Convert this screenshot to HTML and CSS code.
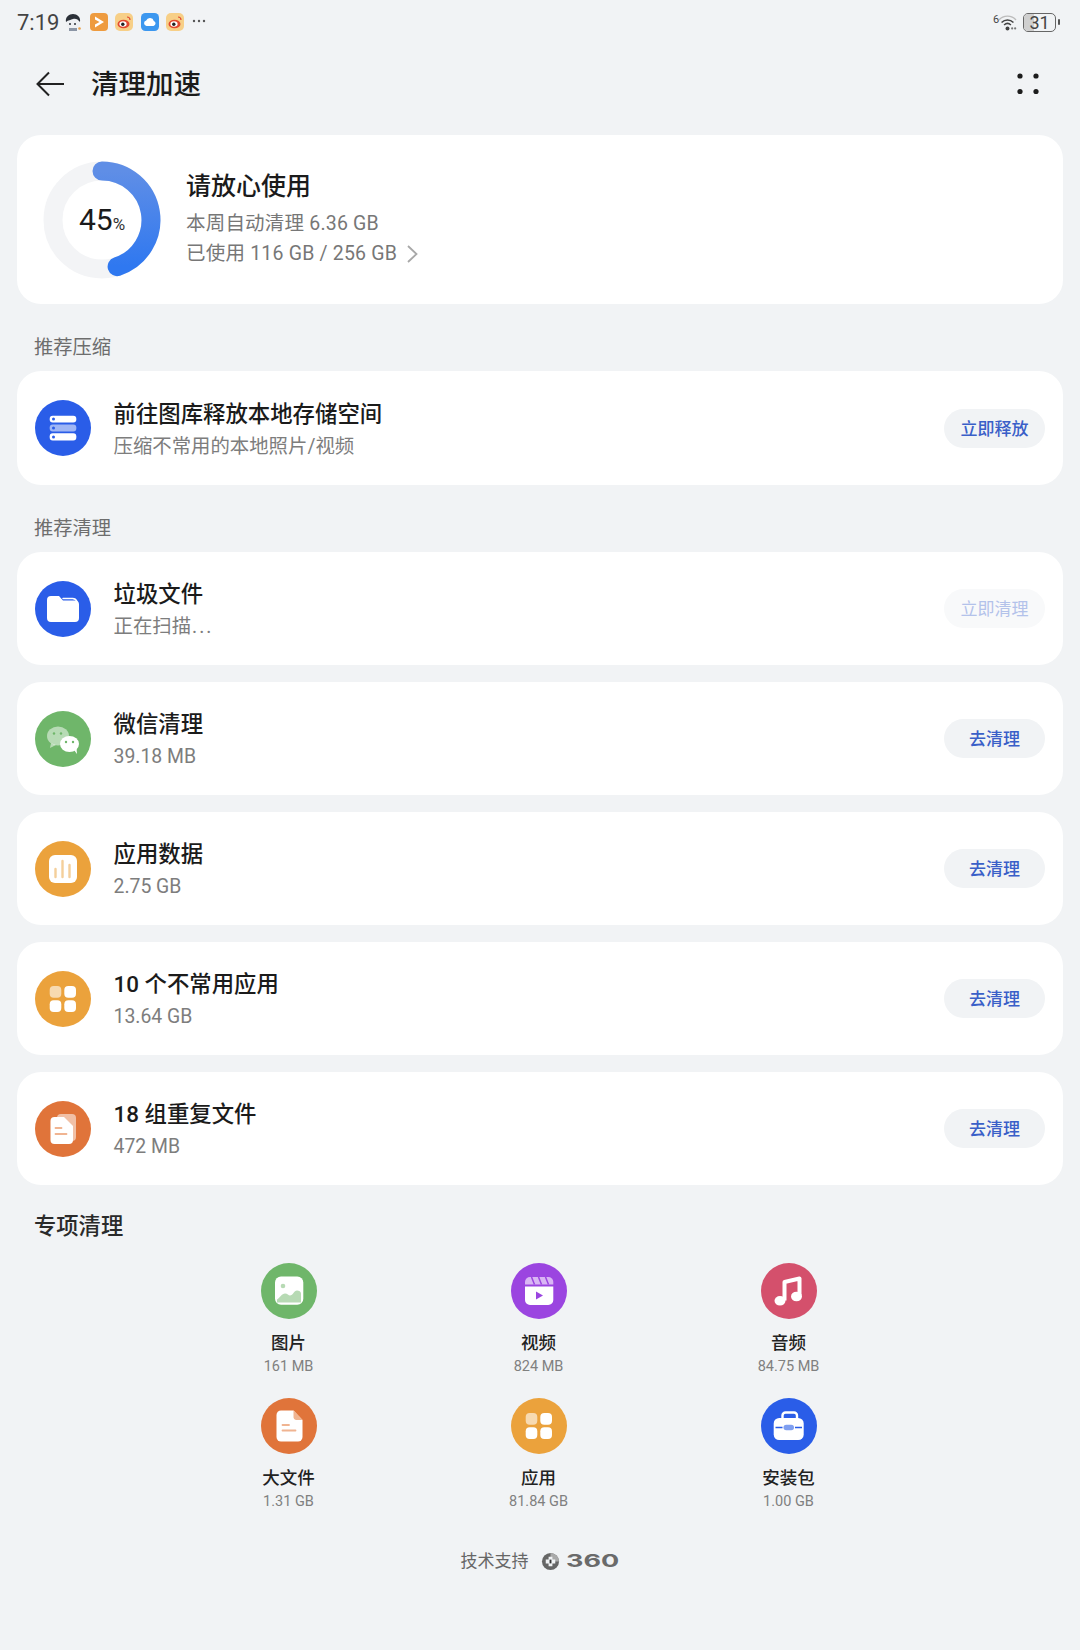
FILE: index.html
```html
<!DOCTYPE html>
<html lang="zh-CN">
<head>
<meta charset="utf-8">
<title>清理加速</title>
<link rel="stylesheet" href="styles.css">
</head>
<body>
<div class="status">
  <div class="status-left">
    <span class="time">7:19</span>
    <svg class="ni" viewBox="0 0 18 18"><circle cx="9" cy="10" r="7" fill="#eef0f3"/><path d="M2 9C1 4 5 1 9 1s8 3 7 8c-2-3-5-4-7-3-2 1-5 1-7 3z" fill="#2b3038"/><circle cx="6" cy="11" r="1" fill="#2b3038"/><circle cx="11" cy="11" r="1" fill="#2b3038"/><path d="M5 15h8v3H5z" fill="#8b95a5"/><circle cx="15.500" cy="15.500" r="1.300" fill="#e8a04a"/></svg>
    <svg class="ni" viewBox="0 0 18 18"><rect width="18" height="18" rx="4" fill="#ee9b3f"/><path d="M5 3.500l9 5.500-9 5.500v-3l4.500-2.500L5 6.500z" fill="#fff"/></svg>
    <svg class="ni" viewBox="0 0 18 18"><rect width="18" height="18" rx="5" fill="#f7cf87"/><ellipse cx="8.500" cy="11" rx="6" ry="4.300" fill="#e2492f"/><ellipse cx="8" cy="11" rx="3.600" ry="2.800" fill="#fff"/><circle cx="7.800" cy="11.200" r="1.700" fill="#222"/><path d="M12 4c2 0 3 1.500 3 3" stroke="#e2492f" stroke-width="1.200" fill="none"/></svg>
    <svg class="ni" viewBox="0 0 18 18"><rect width="18" height="18" rx="4.500" fill="#3c97ef"/><path d="M5.500 13a2.800 2.800 0 0 1-.3-5.500A4 4 0 0 1 12.800 8 2.600 2.600 0 0 1 12.500 13z" fill="#fff"/></svg>
    <svg class="ni" viewBox="0 0 18 18"><rect width="18" height="18" rx="5" fill="#f7cf87"/><ellipse cx="8.500" cy="11" rx="6" ry="4.300" fill="#e2492f"/><ellipse cx="8" cy="11" rx="3.600" ry="2.800" fill="#fff"/><circle cx="7.800" cy="11.200" r="1.700" fill="#222"/><path d="M12 4c2 0 3 1.500 3 3" stroke="#e2492f" stroke-width="1.200" fill="none"/></svg>
    <svg class="more" viewBox="0 0 14 4"><circle cx="2" cy="2" r="1.200" fill="#555"/><circle cx="7" cy="2" r="1.200" fill="#555"/><circle cx="12" cy="2" r="1.200" fill="#555"/></svg>
  </div>
  <div class="status-right">
    <span class="wifi-wrap">
      <span class="wifi-six">6</span>
      <svg class="wifi" viewBox="0 0 22 20"><path d="M1 7C6 1 16 1 21 7" fill="none" stroke="#bcbcbc" stroke-width="1.600"/><path d="M4 10c4-4 10-4 14 0" fill="none" stroke="#444" stroke-width="1.800"/><path d="M7 13c2.500-2.400 5.500-2.400 8 0" fill="none" stroke="#444" stroke-width="1.800"/><circle cx="11" cy="17" r="2.300" fill="#444"/><circle cx="16.500" cy="17" r="1.300" fill="#777"/><circle cx="20" cy="17" r="1.300" fill="#777"/></svg>
    </span>
    <span class="battery"><span class="battery-fill"></span><span class="battery-num">31</span></span>
    <span class="battery-tip"></span>
  </div>
</div>

<header class="topbar">
  <svg class="back" viewBox="0 0 28 26"><path d="M13 1.500 1.500 13 13 24.500M1.500 13H28" fill="none" stroke="#222" stroke-width="2"/></svg>
  <h1 class="page-title">清理加速</h1>
  <svg class="menu" viewBox="0 0 22 22"><circle cx="3" cy="3" r="2.600" fill="#1c1c1c"/><circle cx="19" cy="3" r="2.600" fill="#1c1c1c"/><circle cx="3" cy="18.500" r="2.600" fill="#1c1c1c"/><circle cx="19" cy="18.500" r="2.600" fill="#1c1c1c"/></svg>
</header>

<main class="content">
  <section class="card summary">
    <div class="ring">
      <svg class="ring-svg" viewBox="0 0 118 118">
        <defs><linearGradient id="ringg" x1="0" y1="0" x2="0" y2="1"><stop offset="0" stop-color="#5f8ee6"/><stop offset="1" stop-color="#2f78f0"/></linearGradient></defs>
        <circle cx="59" cy="59" r="49" fill="none" stroke="#f3f4f6" stroke-width="19"/>
        <path d="M59 10A49 49 0 0 1 74.100 105.600" fill="none" stroke="url(#ringg)" stroke-width="19" stroke-linecap="round"/>
      </svg>
      <div class="ring-label"><span class="ring-num">45</span><span class="ring-pct">%</span></div>
    </div>
    <div class="summary-text">
      <div class="summary-title">请放心使用</div>
      <div class="summary-sub">本周自动清理 6.36 GB</div>
      <div class="summary-sub">已使用 116 GB / 256 GB
        <svg class="chev" viewBox="0 0 11 18"><path d="M1 1l8.500 8L1 17" fill="none" stroke="#a8a8a8" stroke-width="1.800"/></svg>
      </div>
    </div>
  </section>

  <h2 class="label">推荐压缩</h2>
  <section class="card row">
    <svg class="icon" viewBox="0 0 56 56"><circle cx="28" cy="28" r="28" fill="#2a5de8"/><rect x="14.700" y="15.700" width="26.600" height="6.800" rx="3" fill="#fff"/><rect x="14.700" y="24.400" width="26.600" height="7" rx="3" fill="#fff" fill-opacity=".55"/><rect x="14.700" y="33.300" width="26.600" height="7.200" rx="3" fill="#fff"/><circle cx="18.500" cy="19" r="1.500" fill="#2a5de8"/><circle cx="18.500" cy="28" r="1.500" fill="#2a5de8"/><circle cx="18.500" cy="37" r="1.500" fill="#2a5de8"/></svg>
    <div class="row-text"><div class="row-title">前往图库释放本地存储空间</div><div class="row-sub">压缩不常用的本地照片/视频</div></div>
    <span class="btn">立即释放</span>
  </section>

  <h2 class="label">推荐清理</h2>
  <div class="stack">
    <section class="card row">
      <svg class="icon" viewBox="0 0 56 56"><circle cx="28" cy="28" r="28" fill="#2a5de8"/><path d="M12 19a4 4 0 0 1 4-4h8l4 4.500h12a4 4 0 0 1 4 4V37a4 4 0 0 1-4 4H16a4 4 0 0 1-4-4z" fill="#fff"/><path d="M28 17.500h9a5 5 0 0 1 5 3" fill="none" stroke="#fff" stroke-width="1.500" stroke-linecap="round"/></svg>
      <div class="row-text"><div class="row-title">垃圾文件</div><div class="row-sub">正在扫描<span class="dots">...</span></div></div>
      <span class="btn btn-off">立即清理</span>
    </section>
    <section class="card row">
      <svg class="icon" viewBox="0 0 56 56"><circle cx="28" cy="28" r="28" fill="#6fb66a"/><ellipse cx="23" cy="25" rx="11" ry="9.500" fill="#fff" fill-opacity=".5"/><path d="M16 32l-1 5 6-3z" fill="#fff" fill-opacity=".5"/><ellipse cx="34.500" cy="33" rx="9.500" ry="8" fill="#fff"/><path d="M39 39l3 4-.5-6z" fill="#fff"/><circle cx="19" cy="22.500" r="1.200" fill="#6fb66a"/><circle cx="26" cy="22.500" r="1.200" fill="#6fb66a"/><circle cx="31" cy="31" r="1.200" fill="#6fb66a"/><circle cx="38" cy="31" r="1.200" fill="#6fb66a"/></svg>
      <div class="row-text"><div class="row-title">微信清理</div><div class="row-sub">39.18 MB</div></div>
      <span class="btn">去清理</span>
    </section>
    <section class="card row">
      <svg class="icon" viewBox="0 0 56 56"><circle cx="28" cy="28" r="28" fill="#eba23c"/><rect x="14" y="14" width="28" height="28" rx="6" fill="#fff"/><path d="M20.500 28v8M27.500 20v16M34.500 24v12" stroke="#f4cf9b" stroke-width="2.400" stroke-linecap="round"/></svg>
      <div class="row-text"><div class="row-title">应用数据</div><div class="row-sub">2.75 GB</div></div>
      <span class="btn">去清理</span>
    </section>
    <section class="card row">
      <svg class="icon" viewBox="0 0 56 56"><circle cx="28" cy="28" r="28" fill="#eba23c"/><rect x="14.700" y="15" width="11.600" height="11.700" rx="4" fill="#fff" fill-opacity=".6"/><rect x="29.300" y="15" width="11.700" height="11.700" rx="4" fill="#fff"/><rect x="14.700" y="29.300" width="11.600" height="11.700" rx="4" fill="#fff"/><rect x="29.300" y="29.300" width="11.700" height="11.700" rx="4" fill="#fff"/></svg>
      <div class="row-text"><div class="row-title">10 个不常用应用</div><div class="row-sub">13.64 GB</div></div>
      <span class="btn">去清理</span>
    </section>
    <section class="card row">
      <svg class="icon" viewBox="0 0 56 56"><circle cx="28" cy="28" r="28" fill="#e0743a"/><rect x="22" y="13" width="19" height="27" rx="4" fill="#fff" fill-opacity=".55"/><path d="M15.500 20a4 4 0 0 1 4-4H29l9 9v14a4 4 0 0 1-4 4H19.500a4 4 0 0 1-4-4z" fill="#fff"/><path d="M20.500 27h6M20.500 33h11" stroke="#f0b491" stroke-width="1.800" stroke-linecap="round"/></svg>
      <div class="row-text"><div class="row-title">18 组重复文件</div><div class="row-sub">472 MB</div></div>
      <span class="btn">去清理</span>
    </section>
  </div>

  <h2 class="label-strong">专项清理</h2>
  <div class="grid">
    <div class="tile">
      <svg class="icon" viewBox="0 0 56 56"><circle cx="28" cy="28" r="28" fill="#6fb66a"/><rect x="14" y="13.500" width="28.300" height="28.300" rx="6" fill="#fff"/><circle cx="22" cy="23" r="2.300" fill="#b7dab4"/><path d="M16 39.500v-3c3-2 5-6 8-6 2.500 0 3.500 2 5 2 3 0 4-5 7-5 2 0 4 1 4 3v9z" fill="#b7dab4"/></svg>
      <div class="tile-name">图片</div><div class="tile-size">161 MB</div>
    </div>
    <div class="tile">
      <svg class="icon" viewBox="0 0 56 56"><circle cx="28" cy="28" r="28" fill="#9b45e0"/><path d="M14 21.500V19a5 5 0 0 1 5-5h18.300a5 5 0 0 1 5 5v2.500z" fill="#d9b6f4"/><path d="M20.500 14l3 7.500M27.500 14l3 7.500M34.500 14l3 7.500" stroke="#9b45e0" stroke-width="1.500"/><path d="M14 23.500h28.300V37a5 5 0 0 1-5 5H19a5 5 0 0 1-5-5z" fill="#fff"/><path d="M25 28.500l7 4-7 4z" fill="#9b45e0"/></svg>
      <div class="tile-name">视频</div><div class="tile-size">824 MB</div>
    </div>
    <div class="tile">
      <svg class="icon" viewBox="0 0 56 56"><circle cx="28" cy="28" r="28" fill="#d4506c"/><path d="M23.500 37.500V19l15-3.500v17" fill="none" stroke="#fff" stroke-width="4" stroke-linejoin="round"/><ellipse cx="19" cy="37.800" rx="5.500" ry="4.800" fill="#fff"/><ellipse cx="35.500" cy="33.500" rx="5.500" ry="4.800" fill="#fff"/></svg>
      <div class="tile-name">音频</div><div class="tile-size">84.75 MB</div>
    </div>
    <div class="tile">
      <svg class="icon" viewBox="0 0 56 56"><circle cx="28" cy="28" r="28" fill="#e0743a"/><path d="M15.500 17a4.500 4.500 0 0 1 4.500-4.500h12.500L41.500 22v17a4.500 4.500 0 0 1-4.500 4.500H20a4.500 4.500 0 0 1-4.500-4.500z" fill="#fff"/><path d="M32.500 12.500v6a3 3 0 0 0 3 3.500h6z" fill="#f0b491"/><path d="M21.500 27h6.500M21.500 32.500h13" stroke="#f0b491" stroke-width="1.800" stroke-linecap="round"/></svg>
      <div class="tile-name">大文件</div><div class="tile-size">1.31 GB</div>
    </div>
    <div class="tile">
      <svg class="icon" viewBox="0 0 56 56"><circle cx="28" cy="28" r="28" fill="#eba23c"/><rect x="14.700" y="15" width="11.600" height="11.700" rx="4" fill="#fff" fill-opacity=".6"/><rect x="29.300" y="15" width="11.700" height="11.700" rx="4" fill="#fff"/><rect x="14.700" y="29.300" width="11.600" height="11.700" rx="4" fill="#fff"/><rect x="29.300" y="29.300" width="11.700" height="11.700" rx="4" fill="#fff"/></svg>
      <div class="tile-name">应用</div><div class="tile-size">81.84 GB</div>
    </div>
    <div class="tile">
      <svg class="icon" viewBox="0 0 56 56"><circle cx="28" cy="28" r="28" fill="#2a5de8"/><path d="M21.500 20v-2.500a3 3 0 0 1 3-3h8.500a3 3 0 0 1 3 3V20" fill="none" stroke="#fff" stroke-width="2.400"/><rect x="12.700" y="20" width="30" height="22" rx="5.500" fill="#fff"/><path d="M14.500 29.500h7M34 29.500h7" stroke="#2a5de8" stroke-width="1.300"/><rect x="22.500" y="26.700" width="10.500" height="5.600" rx="2.800" fill="#7f9ff0"/></svg>
      <div class="tile-name">安装包</div><div class="tile-size">1.00 GB</div>
    </div>
  </div>

  <footer class="foot">
    <span class="foot-text">技术支持</span>
    <svg class="foot-logo" viewBox="0 0 20 20"><circle cx="10" cy="10" r="9" fill="#666"/><path d="M10 1a9 9 0 0 1 9 9h-9z" fill="#aaa"/><path d="M8 5h4v3h3v4h-3v3H8v-3H5V8h3z" fill="#f1f3f5"/><path d="M9 8h2v4H9z" fill="#333"/></svg>
    <span class="foot-brand">360</span>
  </footer>
</main>
</body>
</html>
```

FILE: styles.css
```css
* { box-sizing: border-box; }
html, body { margin: 0; padding: 0; }
body {
  width: 1080px;
  height: 1650px;
  overflow: hidden;
  background: #f1f3f5;
  color: #1b1b1b;
  font-family: Roboto, "Noto Sans CJK SC", sans-serif;
}

.status {
  height: 44px;
  display: flex;
  align-items: center;
  justify-content: space-between;
  padding: 0 20px 0 17px;
}
.status-left { display: flex; align-items: center; gap: 7.5px; }
.time { font-size: 22px; color: #444; width: 39px; margin-right: .5px; }
.ni { width: 18px; height: 18px; display: block; }
.more { width: 14px; height: 4px; margin-bottom: 2px; display: block; }
.status-right { display: flex; align-items: center; }
.wifi-wrap { display: flex; align-items: flex-start; margin-right: 6px; }
.wifi-six { font-size: 11px; line-height: 12px; color: #444; width: 5px; }
.wifi { width: 19px; height: 17px; display: block; }
.battery {
  position: relative;
  width: 33px;
  height: 19px;
  border: 1.5px solid #666;
  border-radius: 5px;
  display: flex;
  align-items: center;
  justify-content: center;
  overflow: hidden;
}
.battery-fill { position: absolute; left: 0; top: 0; bottom: 0; width: 31%; background: #cfcfcf; }
.battery-num { position: relative; font-size: 18px; line-height: 17px; color: #444; }
.battery-tip { width: 2px; height: 6px; background: #555; margin-left: 2px; border-radius: 1px; }

.topbar {
  height: 80px;
  display: flex;
  align-items: center;
  padding: 0 41px 0 36px;
}
.back { width: 28px; height: 26px; display: block; }
.page-title { flex: 1; margin: 2px 0 0 27px; font-size: 27.5px; line-height: 36px; font-weight: 500; color: #1b1b1b; }
.menu { width: 22px; height: 22px; display: block; }

.content { padding: 11px 17px 0; }
.card { background: #fff; border-radius: 24px; }

.summary { height: 169px; display: flex; align-items: center; padding-left: 26px; }
.ring { position: relative; width: 118px; height: 118px; flex: none; }
.ring-svg { width: 118px; height: 118px; display: block; }
.ring-label {
  position: absolute;
  inset: 0;
  display: flex;
  align-items: baseline;
  justify-content: center;
  padding-top: 41px;
  line-height: 36px;
}
.ring-num { font-size: 30px; color: #1b1b1b; }
.ring-pct { font-size: 17px; color: #333; }
.summary-text { margin-left: 25px; padding-top: 3px; }
.summary-title { font-size: 25px; line-height: 34px; font-weight: 500; margin-bottom: 3px; margin-top: -5px; }
.summary-sub { font-size: 19.5px; line-height: 30px; color: #777; letter-spacing: .2px; display: flex; align-items: center; gap: 10px; position: relative; top: 2px; }
.chev { width: 11px; height: 18px; display: block; }

.label { margin: 0; font-size: 19.3px; line-height: 26px; font-weight: 400; color: #6d6d6d; padding: 31px 0 10px 17px; }
.stack { display: grid; gap: 17px; }
.row { height: 113px; display: flex; align-items: center; padding: 0 18px 0 17.5px; }
.row:not(.stack .row) { height: 114px; }
.icon { width: 56px; height: 56px; display: block; flex: none; }
.row-text { flex: 1; margin-left: 23px; padding-top: 5px; }
.row-title { font-size: 22.4px; line-height: 31px; font-weight: 500; color: #1b1b1b; }
.row-sub { font-size: 19.4px; line-height: 33px; color: #7d7d7d; }
.dots { letter-spacing: 2px; margin-left: 1px; }
.btn {
  width: 101px;
  height: 39px;
  border-radius: 20px;
  background: #f1f3f5;
  color: #3a5fc8;
  font-size: 17px;
  font-weight: 500;
  line-height: 41px;
  text-align: center;
}
.btn-off { background: #f8f9fa; color: #b3c2ea; font-weight: 400; }

.label-strong { margin: 0; font-size: 22.3px; line-height: 30px; font-weight: 500; color: #2a2a2a; padding: 26px 0 22px 17px; }
.grid { display: grid; grid-template-columns: repeat(3, 250px); justify-content: center; padding-right: 3px; }
.tile { height: 135px; display: flex; flex-direction: column; align-items: center; }
.tile-name { font-size: 17.5px; line-height: 24px; font-weight: 500; color: #222; margin-top: 12px; }
.tile-size { font-size: 14.5px; line-height: 20px; color: #808080; margin-top: 2px; }

.foot { display: flex; align-items: center; justify-content: center; padding-top: 4px; height: 30px; margin-top: 11px; }
.foot-text { font-size: 17px; line-height: 24px; color: #666; }
.foot-logo { width: 19px; height: 19px; display: block; margin-left: 12px; }
.foot-brand {
  display: block;
  width: 54px;
  margin-left: 6px;
  font-family: Inter, sans-serif;
  font-size: 18px;
  line-height: 20px;
  font-weight: 700;
  color: #6a6a6a;
  transform: scaleX(1.5);
  transform-origin: left center;
}
```
